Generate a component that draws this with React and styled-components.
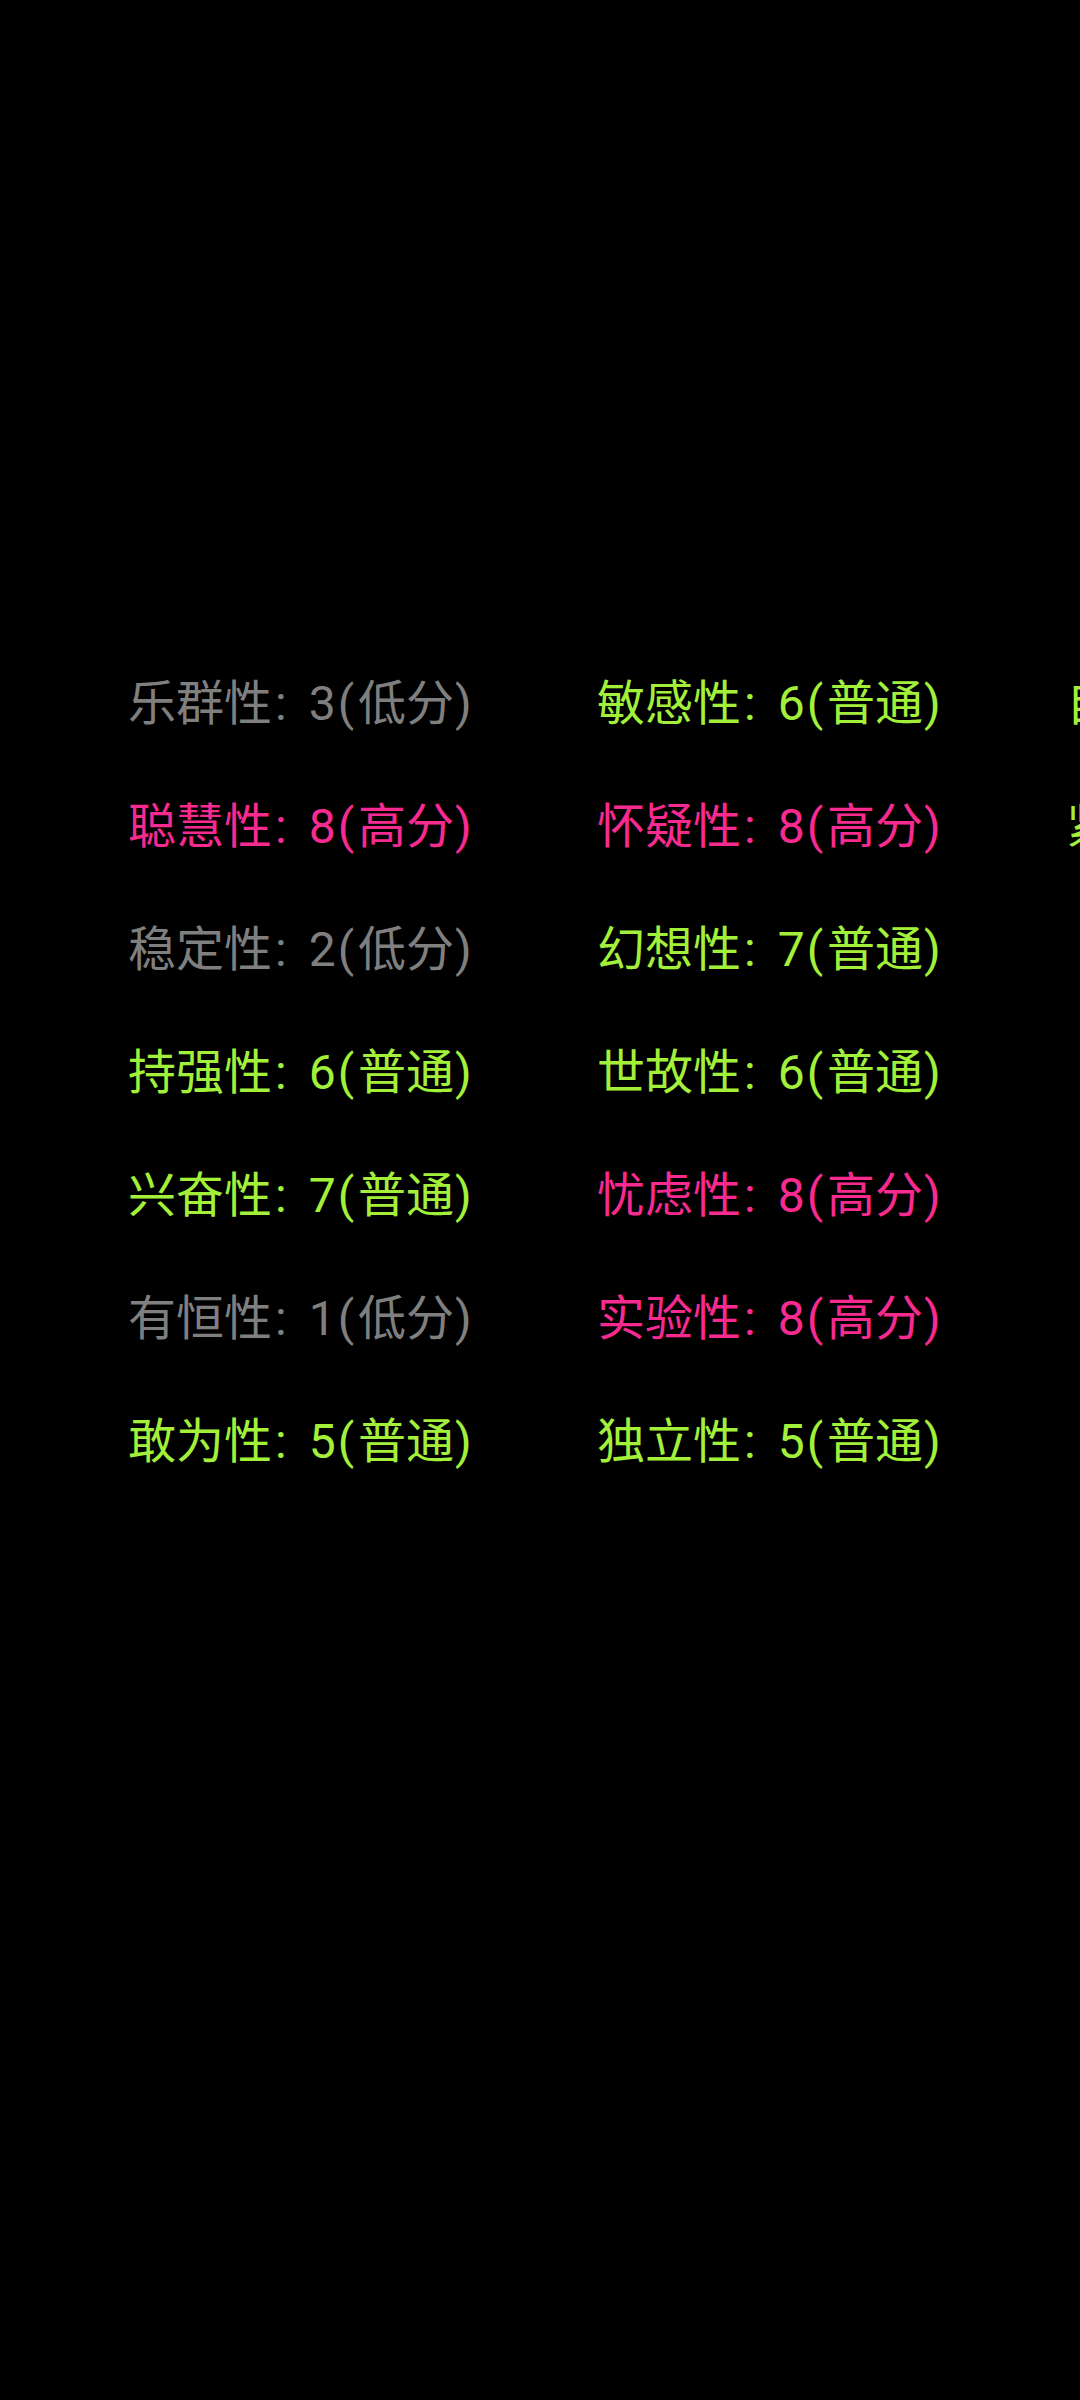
import styled, { createGlobalStyle } from 'styled-components'

const GlobalStyle = createGlobalStyle`
  html, body {
    margin: 0;
    padding: 0;
    background: #000000;
    overflow: hidden;
  }
`

const Screen = styled.div`
  width: 1080px;
  height: 2400px;
  background: #000000;
  overflow: hidden;
  box-sizing: border-box;
  padding: 642px 0 0 128px;
`

const FactorGrid = styled.div`
  display: grid;
  grid-auto-flow: column;
  grid-template-rows: repeat(7, 123px);
  grid-auto-columns: 469px;
  width: max-content;
`

const Factor = styled.div`
  display: flex;
  align-items: center;
  white-space: nowrap;
  font-family: Roboto, 'Noto Sans CJK SC', sans-serif;
  font-size: 48px;
  color: ${(props) => props.color};
`

const Label = styled.span`
  display: inline-block;
  line-height: 1.2;
`

const Colon = styled.span`
  margin: 0 22px 0 3px;
`

const OpenParen = styled.span`
  margin: 0 4px 0 2px;
`

const CloseParen = styled.span`
  margin-left: 1px;
`

const levelColors = {
  低分: '#7f7f7f',
  普通: '#a3f03a',
  高分: '#f72a90'
}

const factors = [
  ['乐群性', 3, '低分'],
  ['聪慧性', 8, '高分'],
  ['稳定性', 2, '低分'],
  ['持强性', 6, '普通'],
  ['兴奋性', 7, '普通'],
  ['有恒性', 1, '低分'],
  ['敢为性', 5, '普通'],
  ['敏感性', 6, '普通'],
  ['怀疑性', 8, '高分'],
  ['幻想性', 7, '普通'],
  ['世故性', 6, '普通'],
  ['忧虑性', 8, '高分'],
  ['实验性', 8, '高分'],
  ['独立性', 5, '普通'],
  ['自律性', 6, '普通'],
  ['紧张性', 5, '普通']
]

const App = () => {
  return (
    <>
      <GlobalStyle />
      <Screen>
        <FactorGrid>
          {factors.map(([name, score, level]) => (
            <Factor key={name} color={levelColors[level]}>
              <Label>
                {name}
                <Colon>:</Colon>
                {score}
                <OpenParen>(</OpenParen>
                {level}
                <CloseParen>)</CloseParen>
              </Label>
            </Factor>
          ))}
        </FactorGrid>
      </Screen>
    </>
  )
}

export default App
